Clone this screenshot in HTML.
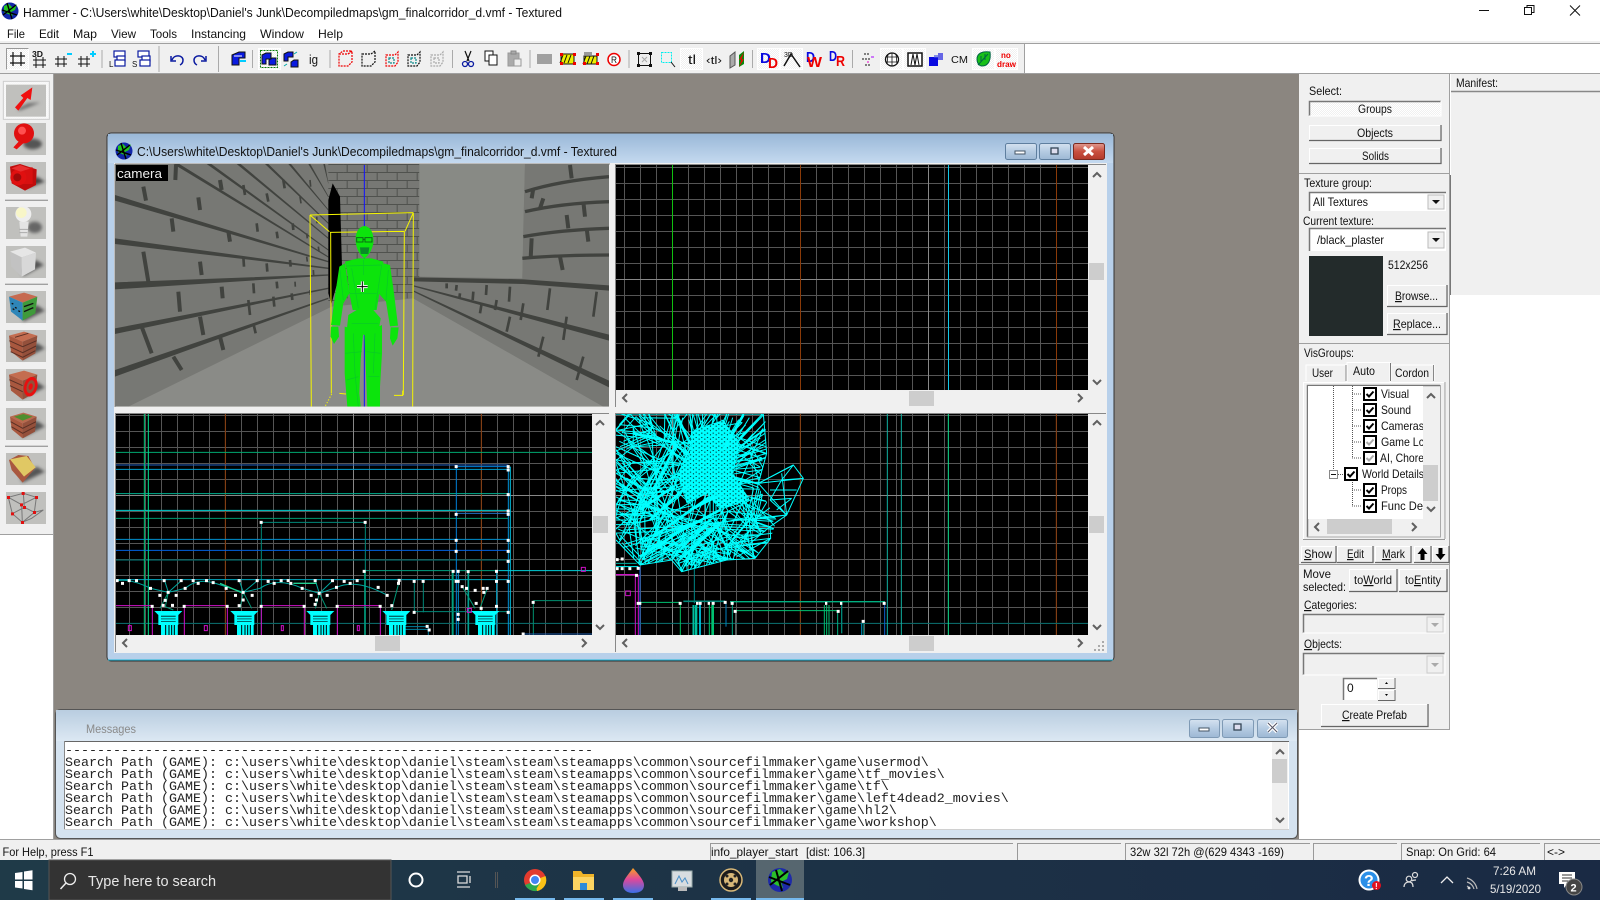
<!DOCTYPE html>
<html><head><meta charset="utf-8"><title>Hammer</title>
<style>
html,body{margin:0;padding:0;background:#fff;width:1600px;height:900px;overflow:hidden}
svg{display:block}
text{font-family:"Liberation Sans",sans-serif;font-size:12px;fill:#111;white-space:pre}
.m{font-family:"Liberation Mono",monospace;font-size:13.33px;fill:#222}
.t{fill:#e8e8e8;font-size:15px}
</style></head><body>
<svg xmlns="http://www.w3.org/2000/svg" width="1600" height="900" viewBox="0 0 1600 900">
<defs>
<filter id="bl" x="-30%" y="-30%" width="160%" height="160%"><feGaussianBlur stdDeviation="5"/></filter>
<pattern id="gridTop" patternUnits="userSpaceOnUse" x="624" y="167" width="16" height="16"><rect width="16" height="16" fill="#000"/><rect width="16" height="1" fill="#555"/><rect width="1" height="16" fill="#555"/></pattern>
<pattern id="gridBR" patternUnits="userSpaceOnUse" x="624" y="415" width="16" height="16"><rect width="16" height="16" fill="#000"/><rect width="16" height="1" fill="#555"/><rect width="1" height="16" fill="#555"/></pattern>
<pattern id="gridBL" patternUnits="userSpaceOnUse" x="129" y="415" width="16" height="16"><rect width="16" height="16" fill="#000"/><rect width="16" height="1" fill="#555"/><rect width="1" height="16" fill="#555"/></pattern>
<pattern id="backBrick" patternUnits="userSpaceOnUse" x="700" y="12" width="60" height="48"><rect width="60" height="48" fill="#777874"/><rect width="60" height="3" fill="#50524e"/><rect y="24" width="60" height="3" fill="#50524e"/><rect x="10" width="3" height="24" fill="#50524e"/><rect x="40" y="24" width="3" height="24" fill="#50524e"/></pattern>
<pattern id="speck" patternUnits="userSpaceOnUse" width="17" height="13"><rect width="17" height="13" fill="#0ff"/><rect x="2" y="3" width="3" height="3" fill="#000"/><rect x="11" y="8" width="3" height="3" fill="#000"/></pattern>
<pattern id="dots" patternUnits="userSpaceOnUse" width="2" height="2"><rect width="2" height="2" fill="#f0f0f0"/><rect width="1" height="1" fill="#fff"/><rect x="1" y="1" width="1" height="1" fill="#fff"/></pattern>
<clipPath id="cCam"><rect x="15" y="12" width="1482" height="728"/></clipPath>
<clipPath id="cBL"><rect x="18" y="12" width="1428" height="663"/></clipPath>
<clipPath id="cBR"><rect x="18" y="12" width="1416" height="663"/></clipPath>
<clipPath id="cTree"><rect x="1308" y="386" width="115" height="133"/></clipPath>
<clipPath id="cDense"><path d="M0 0H465L470 130L445 230L500 330L482 385L435 445L350 450L215 485L185 450L90 465L0 370Z"/></clipPath>
<linearGradient id="wt" x1="0" y1="0" x2="0" y2="1"><stop offset="0" stop-color="#9ab8d8"/><stop offset="1" stop-color="#c4d9ef"/></linearGradient>
<linearGradient id="mt" x1="0" y1="0" x2="0" y2="1"><stop offset="0" stop-color="#b9cde0"/><stop offset="1" stop-color="#dce8f3"/></linearGradient>
<linearGradient id="tb" x1="0" y1="0" x2="1" y2="0"><stop offset="0" stop-color="#1f3a48"/><stop offset="1" stop-color="#1a2a44"/></linearGradient>
<linearGradient id="drop" x1="0" y1="0" x2="0" y2="1"><stop offset="0" stop-color="#f7a020"/><stop offset=".45" stop-color="#e0489a"/><stop offset="1" stop-color="#3a70e8"/></linearGradient>
<linearGradient id="wbtn" x1="0" y1="0" x2="0" y2="1"><stop offset="0" stop-color="#d5e2f0"/><stop offset=".5" stop-color="#b5cbe2"/><stop offset="1" stop-color="#9db8d4"/></linearGradient>
<linearGradient id="wred" x1="0" y1="0" x2="0" y2="1"><stop offset="0" stop-color="#e09a90"/><stop offset=".5" stop-color="#c9503f"/><stop offset="1" stop-color="#b23a2c"/></linearGradient>
<g id="capital">
<path d="M-42 -6H42L30 6V36H-30V6Z" fill="#0ff"/>
<path d="M-22 8h44v4h-44zM-22 16h44v3h-44zM-22 24h44v3h-44z" fill="#006868"/>
<rect x="-22" y="36" width="50" height="36" fill="#0ff"/>
<path d="M-8 36v36M2 36v36M10 36v30M18 36v36" stroke="#000" stroke-width="3"/>
</g>
<g id="gl"><circle r="8.5" fill="#1226a8"/><path d="M-6 -5L-1 -7L3 -3L7 -7L5 -1L1 1L3 5L-2 3L-6 1Z" fill="#22c41e"/><path d="M-7 4L6 -6M-3 -8L2 8M-8 -1L7 4" stroke="#000" stroke-width="1.400"/></g>
<path id="tang" fill="none" stroke="#0ff" stroke-width="3" d="M18 60L120 70L185 100L200 15M120 70L60 12M120 70L100 12M120 70L30 110M120 70L185 100L150 170L100 240L18 190M18 110L150 170M18 190L100 240L70 330L18 300M100 240L190 230L150 170M190 230L230 130L185 100M230 130L300 15M70 330L160 310L190 230M70 330L90 465M70 330L18 330M160 310L90 465M160 310L215 400L90 465M215 400L185 450M215 400L300 340L350 450M300 340L435 445M300 340L480 350M160 310L300 340M90 400L350 450M120 440L300 340M185 450L240 390M215 485L260 400M260 400L350 450M350 450L360 400L435 445M360 400L482 385M360 400L420 330M420 330L480 350M420 330L445 220M470 130L300 180M465 70L300 180M460 15L300 180M400 15L300 180M350 15L300 180M250 15L300 180M185 100L300 180M230 130L300 180M190 230L300 180M300 340L300 180M420 330L300 180M445 220L300 180M380 100L470 130M380 100L460 15M18 390L90 465M18 240L160 310M18 150L100 240M60 12L18 60M150 170L70 330M100 240L160 310M240 390L300 340"/>
</defs>

<rect width="1600" height="900" fill="#fff"/>
<text x="23" y="17" style="font-size:13px" textLength="539" lengthAdjust="spacingAndGlyphs">Hammer - C:\Users\white\Desktop\Daniel's Junk\Decompiledmaps\gm_finalcorridor_d.vmf - Textured</text>
<use href="#gl" x="10" y="11"/>
<path d="M1479 10.500h10" stroke="#111"/>
<path d="M1524.500 7.500h7v7h-7zM1527 7.500V5.500h7v7h-2.500" fill="none" stroke="#111"/>
<path d="M1570 5.500L1580 15.500M1580 5.500L1570 15.500" stroke="#111"/>

<text x="7" y="38" textLength="18" lengthAdjust="spacingAndGlyphs">File</text>
<text x="39" y="38" textLength="20" lengthAdjust="spacingAndGlyphs">Edit</text>
<text x="73" y="38" textLength="24" lengthAdjust="spacingAndGlyphs">Map</text>
<text x="111" y="38" textLength="25" lengthAdjust="spacingAndGlyphs">View</text>
<text x="150" y="38" textLength="27" lengthAdjust="spacingAndGlyphs">Tools</text>
<text x="191" y="38" textLength="55" lengthAdjust="spacingAndGlyphs">Instancing</text>
<text x="260" y="38" textLength="44" lengthAdjust="spacingAndGlyphs">Window</text>
<text x="318" y="38" textLength="25" lengthAdjust="spacingAndGlyphs">Help</text>

<rect y="41" width="1600" height="2" fill="#f0f0f0"/>
<rect y="43" width="1600" height="1" fill="#a0a0a0"/>
<rect y="44" width="1025" height="29" fill="#f0f0f0"/>
<rect x="1024" y="44" width="1" height="29" fill="#a0a0a0"/>
<rect y="73" width="1600" height="1" fill="#a0a0a0"/>
<path d="M102 50v18M159 46v26M218.500 46v26M252.500 50v18M330 50v18M452.500 50v18M530 50v18M629 50v18M752.500 50v18M852.500 50v18" stroke="#aaa"/>
<g fill="url(#dots)" stroke="#fff"><rect x="6.500" y="48.500" width="22" height="21"/><rect x="258.500" y="48.500" width="22" height="21"/><rect x="680.500" y="48.500" width="22" height="21"/><rect x="757.500" y="48.500" width="22" height="21"/><rect x="780.500" y="48.500" width="22" height="21"/><rect x="880.500" y="48.500" width="22" height="21"/><rect x="903.500" y="48.500" width="22" height="21"/><rect x="972.500" y="48.500" width="22" height="21"/><rect x="995.500" y="48.500" width="22" height="21"/></g>
<path d="M6.500 69.500V48.500H28.500" fill="none" stroke="#999"/>

<!-- toolbar icons -->
<g fill="none" stroke="#111">
<path d="M13 52v14M21 52v14M10 56h15M10 63h15" stroke-width="1.200"/>
<path d="M36 57v11M43 57v11M33 60h13M33 65h13M58 56v11M64 56v11M55 59h12M55 64h12M81 56v11M87 56v11M78 59h12M78 64h12" stroke-width="1"/>
<path d="M67 54h5" stroke="#0cf" stroke-width="2"/>
<path d="M90 54h6M93 51v6" stroke="#0cf" stroke-width="2"/>
</g>
<text x="32" y="57" style="font-size:8px;font-weight:bold" textLength="11" lengthAdjust="spacingAndGlyphs">3D</text>
<g fill="#fff" stroke="#0a1aa0" stroke-width="1.200"><rect x="114" y="51" width="11" height="6"/><rect x="117" y="56" width="8" height="5"/><rect x="115" y="60" width="10" height="6"/><rect x="138" y="51" width="11" height="6"/><rect x="142" y="56" width="8" height="5"/><rect x="140" y="60" width="10" height="6"/></g>
<text x="109" y="67" style="font-size:8px">L</text><text x="132" y="67" style="font-size:8px">S</text>
<path d="M172 60c2-6 11-5 11 0c0 2-1 4-3 5M171 56v5h5" fill="none" stroke="#0a1aa0" stroke-width="1.500"/>
<path d="M205 60c-2-6-11-5-11 0c0 2 1 4 3 5M206 56v5h-5" fill="none" stroke="#0a1aa0" stroke-width="1.500"/>
<path d="M232 55l7-3h6v6h-6v7h-7z" fill="#0a1ae0" stroke="#111"/><path d="M240 61h6" stroke="#0cf" stroke-width="2"/><path d="M234 56h8" stroke="#fff"/>
<rect x="260.500" y="50.500" width="17" height="17" fill="none" stroke="#0a7a0a" stroke-dasharray="2 1"/>
<path d="M262 55l4-2h5v6h-5v5h-4zM269 60l3-2h4v7h-7z" fill="#0a1ae0" stroke="#111"/>
<path d="M284 54l4-2h5v5h-5v4h-4zM291 62l3-2h4v7h-7z" fill="#0a1ae0" stroke="#111"/><path d="M294 54l3-2M284 66l3-2" stroke="#0aa"/>
<text x="309" y="64" style="font-size:13px" textLength="9" lengthAdjust="spacingAndGlyphs">ig</text>
<g fill="none" stroke-width="1.200" stroke-dasharray="2 1">
<path d="M339 54h9l4-3v11l-4 4h-9z" stroke="#e00"/><path d="M348 54l4-3h-9l-4 3" stroke="#e00"/>
<path d="M362 54h9l4-3v11l-4 4h-9z" stroke="#111"/>
<path d="M386 55h9l3-3v10l-3 4h-9z" stroke="#e00"/><rect x="389" y="58" width="5" height="5" stroke="#0a8a8a"/>
<path d="M408 55h9l3-3v10l-3 4h-9z" stroke="#111"/><rect x="411" y="58" width="5" height="5" stroke="#0a8a8a"/>
<path d="M431 55h9l3-3v10l-3 4h-9z" stroke="#aaa"/><rect x="434" y="58" width="5" height="5" stroke="#aaa"/>
</g>
<path d="M465 51l4 10M471 51l-4 10" stroke="#111" stroke-width="1.200"/><circle cx="465" cy="64" r="2.500" fill="none" stroke="#0a1aa0" stroke-width="1.300"/><circle cx="471" cy="64" r="2.500" fill="none" stroke="#0a1aa0" stroke-width="1.300"/>
<rect x="485" y="51" width="8" height="10" fill="#fff" stroke="#111"/><rect x="489" y="55" width="8" height="10" fill="#fff" stroke="#111"/>
<rect x="508" y="53" width="11" height="13" fill="#aaa" stroke="#999"/><rect x="511" y="51" width="5" height="3" fill="#aaa" stroke="#888"/><rect x="514" y="59" width="7" height="7" fill="#eee" stroke="#999"/>
<rect x="537" y="54" width="15" height="10" fill="#a0a0a0"/>
<rect x="561" y="54" width="13" height="10" fill="#ee0" stroke="#111"/><path d="M563 55l-3 8M567 55l-3 8M571 55l-3 8" stroke="#111"/><path d="M560 53h3v3h-3zM573 53h3v3h-3zM560 62h3v3h-3zM573 62h3v3h-3z" fill="#e00"/>
<rect x="584" y="56" width="13" height="8" fill="#ee0" stroke="#111"/><path d="M586 56l-3 8M590 56l-3 8M594 56l-3 8" stroke="#111"/><path d="M584 52h8v3h-8z" fill="#999"/><path d="M583 62h3v3h-3zM596 62h3v3h-3zM596 53h3v3h-3z" fill="#e00"/>
<circle cx="614" cy="59.500" r="6" fill="#fff" stroke="#e00" stroke-width="1.500"/><text x="611" y="63" style="font-size:9px" textLength="6" lengthAdjust="spacingAndGlyphs">R</text>
<rect x="638.500" y="53.500" width="12" height="12" fill="#eee" stroke="#111"/><path d="M637 52h3v3h-3zM649 52h3v3h-3zM637 64h3v3h-3zM649 64h3v3h-3z" fill="#111"/>
<path d="M642 57l5 5M647 57l-5 5" stroke="#aaa"/>
<rect x="661.500" y="52.500" width="10" height="10" fill="none" stroke="#0ee" stroke-dasharray="2 1"/><path d="M671 62l4 5" stroke="#111"/>
<text x="688" y="64" style="font-size:13px" textLength="8" lengthAdjust="spacingAndGlyphs">tl</text>
<text x="706" y="64" style="font-size:11px" textLength="16" lengthAdjust="spacingAndGlyphs">‹tl›</text>
<path d="M730 56l5-4v13l-5 3z" fill="#aaa" stroke="#555"/><path d="M739 55l5-4v13l-5 3z" fill="#0a8a0a"/><path d="M744 52l-5 8l5-1l-5 8z" fill="#e00"/>
<text x="760" y="63" style="font-size:15px;fill:#0a0ae0;font-weight:bold">D</text><text x="768" y="68" style="font-size:15px;fill:#e00;font-weight:bold" textLength="10" lengthAdjust="spacingAndGlyphs">D</text>
<text x="784" y="57" style="font-size:7px">3D</text>
<text x="806" y="62" style="font-size:15px;fill:#0a0ae0;font-weight:bold" textLength="9" lengthAdjust="spacingAndGlyphs">D</text><text x="807" y="67" style="font-size:15px;fill:#e00;font-weight:bold" textLength="15" lengthAdjust="spacingAndGlyphs">W</text>
<text x="829" y="61" style="font-size:15px;fill:#0a0ae0;font-weight:bold" textLength="8" lengthAdjust="spacingAndGlyphs">D</text><text x="836" y="66" style="font-size:15px;fill:#e00;font-weight:bold" textLength="9" lengthAdjust="spacingAndGlyphs">R</text>
<path d="M784 66l7-12l9 13" fill="none" stroke="#111" stroke-width="1.500"/>
<path d="M864 54h5M862 59h8M865 65h5" stroke="#111" stroke-dasharray="2 1"/><path d="M871 57h3" stroke="#a0f"/><path d="M867 62h2" stroke="#e0c"/>
<circle cx="892" cy="59.500" r="6.500" fill="#fff" stroke="#111" stroke-width="1.300"/><path d="M886 57h12M886 62h12M892 53v13M888 54l-1 10M896 54l1 10" stroke="#111" stroke-width=".8"/>
<rect x="908" y="53" width="14" height="13" fill="#fff" stroke="#111" stroke-width="1.500"/><path d="M911 65l2-11l2 11l2-11l2 11" fill="none" stroke="#111"/>
<rect x="929" y="57" width="9" height="9" fill="#0a0ae0"/><path d="M938 53h5v7h-5z" fill="#0a0ae0" opacity=".6"/><path d="M934 55h4v3h-4z" fill="#4050e0" opacity=".6"/>
<text x="951" y="63" style="font-size:10px" textLength="17" lengthAdjust="spacingAndGlyphs">CM</text>
<path d="M977 59c0-6 6-8 13-7c1 7-1 14-8 14c-3 0-5-3-5-7z" fill="#18c018" stroke="#064"/><path d="M978 65l10-11M981 56v5M985 54v6" stroke="#064"/>
<text x="1001" y="58" style="font-size:8px;fill:#e00;font-weight:bold">no</text><text x="997" y="67" style="font-size:8px;fill:#e00;font-weight:bold" textLength="19" lengthAdjust="spacingAndGlyphs">draw</text>

<!-- left toolbar & main -->
<rect x="54" y="74" width="1245" height="766" fill="#8b8680"/>
<rect x="0" y="74" width="53" height="460" fill="#f0f0f0"/>
<rect x="53" y="74" width="1" height="766" fill="#a0a0a0"/>
<rect x="0" y="534" width="54" height="1" fill="#a0a0a0"/>
<g transform="translate(0 70) scale(.33333)">
<rect x="10" y="34" width="138" height="114" fill="url(#dots)" stroke="#ccc" stroke-width="3"/>
<g fill="#c0c0bd">
<rect x="18" y="44" width="120" height="96"/><rect x="18" y="159" width="120" height="96"/><rect x="18" y="276" width="120" height="96"/><rect x="18" y="411" width="120" height="96"/><rect x="18" y="528" width="120" height="96"/><rect x="18" y="663" width="120" height="96"/><rect x="18" y="780" width="120" height="96"/><rect x="18" y="897" width="120" height="96"/><rect x="18" y="1014" width="120" height="96"/><rect x="18" y="1149" width="120" height="96"/><rect x="18" y="1266" width="120" height="96"/>
</g>
<path d="M15 391h129M15 643h129M15 1129h129" stroke="#a0a0a0" stroke-width="4"/>
<!-- arrow -->
<path d="M58 122L122 97L85 100L52 116Z" fill="#666" filter="url(#bl)"/>
<path d="M45 112L70 84L62 76L97 52L92 90L82 84L55 122Z" fill="#f01010"/>
<!-- magnifier -->
<ellipse cx="98" cy="222" rx="28" ry="16" fill="#555" filter="url(#bl)"/>
<path d="M40 232L62 208L72 218L50 238Z" fill="#e81010"/><circle cx="72" cy="190" r="30" fill="#e01010"/><circle cx="66" cy="182" r="12" fill="#ff5050"/>
<!-- camera -->
<path d="M80 355L135 335L110 320L85 340Z" fill="#444" filter="url(#bl)"/>
<path d="M30 290L60 282L110 298L108 345L75 362L35 340Z" fill="#c00c0c"/><path d="M68 292h30v50h-30z" fill="#d81010"/><circle cx="55" cy="322" r="24" fill="#e01010"/><circle cx="52" cy="322" r="12" fill="#a00a0a"/><path d="M34 295L60 285L90 296L62 305Z" fill="#e83030"/>
<!-- bulb -->
<ellipse cx="104" cy="472" rx="22" ry="17" fill="#666" filter="url(#bl)"/><path d="M58 455h28l-4 45h-20z" fill="#e4e4e4"/><circle cx="70" cy="432" r="24" fill="#eee"/><circle cx="64" cy="428" r="16" fill="#f8f6c8"/><path d="M58 478h26M58 488h24" stroke="#aaa" stroke-width="3"/>
<!-- cube -->
<path d="M70 618L132 585L108 570L60 600Z" fill="#555" filter="url(#bl)"/>
<path d="M30 545L75 533L108 548L65 562Z" fill="#e6e6e6"/><path d="M30 545L65 562L65 620L34 590Z" fill="#c2c2c2"/><path d="M65 562L108 548L105 598L65 620Z" fill="#d8d8d8"/>
<!-- textured cubes -->
<path d="M70 755L135 722L110 705L65 735Z" fill="#555" filter="url(#bl)"/>
<path d="M27 680L72 668L112 680L68 698Z" fill="#c66a50"/><path d="M27 680L68 698L68 752L33 725Z" fill="#2f86b8"/><path d="M68 698L112 680L106 730L68 752Z" fill="#3f9a3a"/>
<path d="M35 700l5 2M45 712l5 3M38 716l5 3M55 722l5 3M72 710l28-10M72 725l28-12" stroke="#111" stroke-width="4"/>
<path d="M68 868L135 835L110 818L60 850Z" fill="#555" filter="url(#bl)"/>
<path d="M27 797L72 785L112 797L68 815Z" fill="#c46d50"/><path d="M27 797L68 815L68 872L33 845Z" fill="#a9583f"/><path d="M68 815L112 797L106 850L68 872Z" fill="#94503b"/>
<path d="M28 812L68 830L110 812M30 830L68 848L108 828M32 845L68 862L106 842M45 802L85 790" stroke="#5a3025" stroke-width="3" fill="none"/>
<path d="M68 985L135 952L110 935L60 967Z" fill="#555" filter="url(#bl)"/>
<path d="M27 914L72 902L112 914L68 932Z" fill="#c46d50"/><path d="M27 914L68 932L68 989L33 962Z" fill="#a9583f"/><path d="M68 932L112 914L106 967L68 989Z" fill="#94503b"/>
<path d="M28 929L68 947M30 947L68 965" stroke="#5a3025" stroke-width="3"/>
<ellipse cx="92" cy="950" rx="20" ry="30" fill="#e81010" transform="rotate(15 92 950)"/><ellipse cx="92" cy="950" rx="12" ry="20" fill="#94503b" transform="rotate(15 92 950)"/><ellipse cx="92" cy="950" rx="6" ry="10" fill="#e81010" transform="rotate(15 92 950)"/>
<path d="M68 1102L135 1069L110 1052L60 1084Z" fill="#555" filter="url(#bl)"/>
<path d="M30 1040L70 1028L110 1040L68 1060Z" fill="#b9694d"/><path d="M42 1040L70 1032L98 1040L68 1052Z" fill="#4f8f2e"/><path d="M30 1040L68 1060L68 1105L35 1078Z" fill="#a9583f"/><path d="M68 1060L110 1040L105 1085L68 1105Z" fill="#94503b"/><path d="M32 1055L68 1075L108 1055M34 1070L68 1090L106 1070" stroke="#5a3025" stroke-width="3" fill="none"/>
<!-- wedge -->
<path d="M68 1238L135 1205L110 1190L60 1222Z" fill="#555" filter="url(#bl)"/>
<path d="M27 1170L55 1155L85 1158L105 1195L68 1238L35 1200Z" fill="#a9583f"/><path d="M30 1168L80 1158L107 1192L72 1220Z" fill="#e0c864"/>
<!-- wire -->
<path d="M25 1282L70 1270L109 1282L65 1304ZM25 1282L37 1331L67 1357L65 1304M109 1282L103 1327L67 1357M70 1270L73 1312L37 1331M73 1312L103 1327M103 1327L130 1320L95 1345L67 1357" fill="none" stroke="#777" stroke-width="3"/>
<path d="M21 1278h9v9h-9zM65 1266h9v9h-9zM105 1278h9v9h-9zM60 1300h9v9h-9zM33 1327h9v9h-9zM69 1308h9v9h-9zM99 1323h9v9h-9zM63 1353h9v9h-9z" fill="#e01010"/>
</g>

<!-- child window -->
<rect x="107" y="133" width="1007" height="528" rx="4" fill="#b8d0ea" stroke="#333"/>
<path d="M108 134h1005v29H108z" fill="url(#wt)"/>
<path d="M108 653h1005v6H108z" fill="#b8d0ea"/><path d="M108 660h1005" stroke="#22b8d8"/>
<use href="#gl" x="124" y="151"/>
<text x="137" y="156" style="font-size:13px" textLength="480" lengthAdjust="spacingAndGlyphs">C:\Users\white\Desktop\Daniel's Junk\Decompiledmaps\gm_finalcorridor_d.vmf - Textured</text>
<g stroke="#5f7f9f"><rect x="1005.500" y="143.500" width="31" height="16" rx="2" fill="url(#wbtn)"/><rect x="1039.500" y="143.500" width="31" height="16" rx="2" fill="url(#wbtn)"/><rect x="1073.500" y="143.500" width="31" height="16" rx="2" fill="url(#wred)" stroke="#7a2a20"/></g>
<rect x="1015" y="151" width="10" height="3" fill="#fff" stroke="#456"/><rect x="1051" y="148" width="7" height="6" fill="#dde" stroke="#345" stroke-width="1.300"/><path d="M1084 147l9 8M1093 147l-9 8" stroke="#fff" stroke-width="3"/>

<rect x="114" y="163" width="993" height="490" fill="#f0f0f0"/>
<rect x="114.500" y="164" width="1" height="243" fill="#888"/><rect x="115" y="163.500" width="495" height="1" fill="#888"/>

<!-- camera view -->
<g transform="translate(110 160) scale(.33333)" clip-path="url(#cCam)">
<rect x="15" y="12" width="1482" height="728" fill="#777874"/>
<path d="M55 740L665 440L910 415L1480 740Z" fill="#8a8b87"/>
<rect x="700" y="12" width="228" height="403" fill="url(#backBrick)"/>
<path d="M655 12H700V430H655Z" fill="url(#backBrick)"/>
<g fill="#41433f">
<path d="M190 12L208 12L655 289L655 293ZM290 12L304 12L655 268L655 272ZM380 12L392 12L655 233L655 237ZM465 12L475 12L655 188L655 192ZM535 12L543 12L655 148L655 152ZM595 12L601 12L655 108L655 112ZM640 12L645 12L655 68L655 72Z"/>
<path d="M15 105L15 122L655 307L655 303ZM15 235L15 252L655 327L655 323ZM15 367L15 388L655 347L655 343ZM15 505L15 522L655 387L655 383ZM15 630L15 650L655 417L655 413Z"/>
</g>
<path d="M100 80L108 122M198 15L196 60M265 112L270 150M185 175L190 215M100 275L115 365M205 395L210 455M95 500L125 580M190 590L215 630M270 305L275 345M270 470L280 525M335 380L338 415M330 530L340 570M355 215L360 245M330 60L335 90" stroke="#41433f" stroke-width="12" fill="none"/>
<path d="M400 75L405 105M470 100L475 125M520 60L524 85M440 190L443 215M500 215L503 235M400 290L402 320M470 310L472 335M430 370L432 400M500 365L502 385M415 420L420 465M490 410L493 440M430 490L437 520M545 400L547 420M540 300L542 320M548 190L550 210" stroke="#41433f" stroke-width="8" fill="none"/>
<path d="M570 110L573 130M600 60L602 80M590 220L592 235M620 170L621 190M590 290L592 305M625 260L627 275M555 365L556 380M610 330L611 345M600 390L601 405" stroke="#41433f" stroke-width="5" fill="none"/>
<path d="M655 120L668 70L690 110L696 320L664 432L655 400Z" fill="#000"/>
<path d="M928 12H1245L1237 355L928 350Z" fill="#888a85"/>
<path d="M1245 12H1497V372L1237 355L1240 200Z" fill="#777874"/>
<path d="M910 350L1497 372V740H1480L910 415Z" fill="#777874"/>
<g fill="#41433f"><path d="M912 352L1240 358L1497 376V392L1240 372L912 364Z"/><path d="M912 376L1497 524V542L912 380ZM912 392L1497 662V682L912 396Z"/></g>
<path d="M1130 375L1128 405M1200 380L1197 425M1320 385L1312 450M1460 395L1450 470M1040 375L1038 392M1090 395L1088 420M1160 420L1155 450M1240 430L1232 480M1370 470L1360 540M1010 370L1010 385M1050 400L1048 415M1115 430L1110 460M1200 470L1190 515M1300 530L1285 590M1420 590L1400 660" stroke="#41433f" stroke-width="8" fill="none"/>
<path d="M1245 95Q1350 62 1497 50M1245 155Q1350 130 1497 125M1240 230Q1350 210 1497 205M1237 295Q1350 285 1497 285" stroke="#41433f" stroke-width="10" fill="none"/>
<path d="M1380 15L1385 55M1270 85L1265 115M1300 115L1290 145M1420 125L1425 170M1370 165L1375 205M1430 205L1435 245M1265 235L1262 295M1350 290L1358 330" stroke="#41433f" stroke-width="12" fill="none"/>
<!-- blue axis -->
<path d="M763 15V740" stroke="#1010ff" stroke-width="3"/>
<!-- yellow box -->
<path d="M600 165L910 158M600 165L604 740M910 158L908 740M660 217L883 214M662 217L664 700M883 214L880 705M600 165L658 215M910 158L885 214M688 700L708 702M852 706L878 706M878 692L878 708" fill="none" stroke="#f5f500" stroke-width="3"/>
<path d="M665 702L645 740" stroke="#f5f500" stroke-width="3" stroke-dasharray="4 5"/>
<!-- figure -->
<g fill="#0ce40c">
<path d="M763 198C785 200 792 225 790 250C785 275 772 290 763 295C750 285 740 270 737 245C735 220 745 200 763 198Z"/>
<path d="M705 305L745 295L785 295L820 305L818 345L808 400L800 450L728 450L718 400L712 340Z"/>
<path d="M705 310L688 320L676 400L663 495L690 497L700 430L718 400Z"/>
<path d="M820 310L840 315L852 400L864 497L840 499L828 425L806 400Z"/>
<path d="M663 500L685 500L687 530L672 552L662 530Z"/>
<path d="M842 502L866 502L862 535L848 557L840 535Z"/>
<path d="M715 465L745 447L790 450L812 475L805 520L765 525L710 515Z"/>
<path d="M704 500L760 515L752 600L748 700L752 740L712 740L704 640Z"/>
<path d="M763 520L816 495L816 580L810 680L810 740L772 740L768 640Z"/>
</g>
<path d="M750 262L778 262L775 282L752 282Z" fill="#0a8a28"/>
<path d="M740 233h19v13h-19zM765 233h21v13h-21zM759 238h6" fill="none" stroke="#0a6a14" stroke-width="3"/>
<path d="M710 318L815 315L795 450M725 325L745 445M760 300V345M720 400L800 400M725 490L805 490M730 520L735 640L745 740M795 520L790 640M706 580L755 575M770 575L812 580M690 330L700 420M835 330L828 420M710 660L745 650M775 650L808 650" fill="none" stroke="#0ac828" stroke-width="2"/>
<path d="M741 380h32M757 364v32" stroke="#fff" stroke-width="9"/><path d="M741 380h32M757 364v32" stroke="#000" stroke-width="3"/>
</g>
<rect x="116" y="165" width="52" height="16" fill="#000"/>
<text x="117" y="178" style="font-size:13px;fill:#eee" textLength="45" lengthAdjust="spacingAndGlyphs">camera</text>

<!-- top right pane -->
<rect x="615" y="164" width="1" height="243" fill="#888"/><rect x="615" y="164" width="491" height="1" fill="#888"/>
<rect x="616" y="165" width="472" height="225" fill="url(#gridTop)"/>
<path d="M616 279.500h472M928.500 165v225" stroke="#888"/>
<path d="M672.500 165v225" stroke="#10c010"/><path d="M800.500 165v225M1056.500 165v225" stroke="#8a3a08"/><path d="M948.500 165v225" stroke="#10c8e8"/>

<!-- bottom left pane -->
<rect x="115" y="413" width="1" height="239" fill="#888"/><rect x="115" y="413" width="494" height="1" fill="#888"/>
<rect x="116" y="414" width="476" height="221" fill="url(#gridBL)"/>
<path d="M116 495.500h476M353.500 414v221" stroke="#888"/>
<g transform="translate(110 410) scale(.33333)" clip-path="url(#cBL)" fill="none" stroke-width="3">
<path d="M346 12V675M1114 12V675" stroke="#8a3a08"/>
<path d="M18 640H1446" stroke="#006868"/>
<path d="M18 127H1446" stroke="#00a870"/>
<path d="M18 165H1195" stroke="#2060c0"/><path d="M18 178H1195" stroke="#00a0d0"/>
<path d="M18 251H1195" stroke="#00b090"/><path d="M18 301H1195" stroke="#00d0d0"/><path d="M18 325H1195" stroke="#009870"/>
<path d="M18 388H1195" stroke="#0090d0"/><path d="M18 421H1195" stroke="#0060e0"/><path d="M18 450H1195" stroke="#006060" stroke-width="4"/>
<path d="M103 12V675" stroke="#00c878"/><path d="M115 12V675" stroke="#00e090"/>
<path d="M1039 170V675M1039 170H1195" stroke="#0080d8"/><path d="M1195 170V675" stroke="#0090d8"/><path d="M1201 170V675" stroke="#00c0e0"/>
<path d="M1040 310H1195" stroke="#2070c0"/>
<path d="M454 337H766V482M454 337V675" stroke="#008878"/>
<path d="M763 482H1030M1045 482H1160" stroke="#00a080"/><path d="M1165 482H1446" stroke="#00d0d8"/>
<path d="M18 509H1195" stroke="#00a8c0"/>
<path d="M765 482V675" stroke="#00a080" stroke-width="5"/><path d="M1028 484V675" stroke="#00a080" stroke-width="6"/><path d="M1075 484V675" stroke="#00a090" stroke-width="5"/><path d="M1045 484V675" stroke="#0090d0"/><path d="M1160 484V675" stroke="#0090b0" stroke-width="4"/>
<path d="M913 514V607M940 514V607M913 605H1195" stroke="#008878"/>
<path d="M1270 572H1446M1270 577V675" stroke="#009070"/><path d="M1240 672H1446" stroke="#2060b0"/>
<path d="M850 650H955M850 658H955M955 650V675" stroke="#0080a0"/>
<path d="M18 587H127M223 587H352M454 587H583M682 587H811M127 587V675M223 587V675M352 587V675M454 587V675M583 587V675M682 587V675M811 587V675" stroke="#d010c8"/>
<path d="M55 647h9v15h-9zM283 647h9v15h-9zM514 647h6v15h-6zM742 647h6v15h-6zM1414 472h12v12h-12zM1072 595h12v12h-12z" stroke="#d010c8"/>
<path d="M22 512Q60 505 122 535M122 535L175 547L226 535Q260 505 310 518L400 547L450 535Q500 500 577 535L628 550L680 532Q740 505 832 556M164 512L175 547M214 512L175 547M388 512L400 547M442 512L400 547M616 512L628 550M668 512L628 550" stroke="#00a8a0"/>
<path d="M175 547L166 590L190 600M175 547L150 595M400 547L390 595M400 547L425 595M628 550L616 595M628 550L650 595M866 520L845 600M1057 530L1095 595M1132 535L1110 595" stroke="#009878"/>
<path d="M330 520L395 548M550 520L620 520" stroke="#20d090" stroke-width="4"/>
<use href="#capital" x="175" y="609"/><use href="#capital" x="403" y="609"/><use href="#capital" x="631" y="609"/><use href="#capital" x="859" y="609"/><use href="#capital" x="1126" y="609"/>
<path stroke="#fff" stroke-width="9" d="M1034 170h9M1190 170h9M1190 180h9M1190 254h9M1190 303h9M1034 313h9M1190 313h9M449 337h9M761 337h9M1034 391h9M1190 391h9M1034 424h9M1190 424h9M1190 454h9M758 484h9M1025 484h9M1040 484h9M1155 484h9M1070 485h9M863 511h9M908 514h9M935 514h9M1034 514h9M1040 514h9M1155 514h9M1190 514h9M17 512h9M33 520h9M53 512h9M75 512h9M117 535h9M158 512h9M209 512h9M221 535h9M245 512h9M260 520h9M285 512h9M305 518h9M344 535h9M383 512h9M395 547h9M437 512h9M470 514h9M488 520h9M509 512h9M530 512h9M538 520h9M572 535h9M611 512h9M623 550h9M663 512h9M675 532h9M698 514h9M716 520h9M737 512h9M800 532h9M827 556h9M861 520h9M170 547h9M145 556h9M194 556h9M161 571h9M122 589h9M218 589h9M347 589h9M372 556h9M422 556h9M383 587h9M449 589h9M599 556h9M647 556h9M611 583h9M578 589h9M677 589h9M806 589h9M841 587h9M908 607h9M1052 530h9M1065 535h9M1091 541h9M1115 535h9M1127 535h9M1117 547h9M1094 580h9M1109 595h9M1155 589h9M1190 607h9M1040 613h9M1040 628h9M947 649h9M953 660h9M1265 577h9M1235 672h9M155 586h9M183 586h9M395 570h9M615 570h9"/>
</g>

<!-- bottom right pane -->
<rect x="615" y="413" width="1" height="239" fill="#888"/><rect x="615" y="413" width="491" height="1" fill="#888"/>
<rect x="616" y="414" width="472" height="221" fill="url(#gridBR)"/>
<path d="M616 495.500h472M672.500 414v221M928.500 414v221" stroke="#888"/>
<g transform="translate(610 410) scale(.33333)" clip-path="url(#cBR)" fill="none" stroke-width="3">
<path d="M571 12V675M1339 12V675" stroke="#8a3a08"/>
<path d="M18 640H1434" stroke="#006868"/>
<path d="M832 12V675M874 12V675" stroke="#10b0a0"/><path d="M1015 12V675" stroke="#10e090"/>
<path d="M253 470V580" stroke="#008888"/>
<path d="M18 494H80" stroke="#d010c8" stroke-width="4"/><path d="M76 494V675M85 494V675" stroke="#d010c8"/><path d="M90 470V675" stroke="#1060e0"/>
<path d="M47 543h14v14h-14z" stroke="#d010c8"/>
<path d="M90 577H210" stroke="#00c070"/><path d="M220 574H345" stroke="#008878" stroke-width="5"/><path d="M360 575H825" stroke="#00b080" stroke-width="4"/><path d="M376 602H685" stroke="#00c070"/>
<path d="M211 580V675" stroke="#00c060"/><path d="M250 585V675" stroke="#00c0a0" stroke-width="5"/><path d="M258 585V675" stroke="#00c0a0" stroke-width="8"/><path d="M270 580V675" stroke="#00d0f0" stroke-width="5"/><path d="M298 585V675" stroke="#00c070"/><path d="M308 585V675" stroke="#00c070" stroke-width="8"/>
<path d="M348 574V650" stroke="#0080c0"/><path d="M367 580V675" stroke="#00a080"/><path d="M377 605V675" stroke="#607070"/><path d="M643 585V675M650 585V675M657 585V675" stroke="#00c070"/><path d="M683 605V675" stroke="#00b080"/><path d="M695 580V670" stroke="#008878" stroke-width="4"/><path d="M755 640V675" stroke="#0090c0"/><path d="M760 640V675" stroke="#008878"/><path d="M824 580V675" stroke="#1060d0"/>
<path d="M18 470H85" stroke="#0ff"/><path d="M18 460H80" stroke="#00b0a0"/>
<!-- tangle -->
<g clip-path="url(#cDense)">
<use href="#tang"/><use href="#tang" transform="translate(18 8)"/><use href="#tang" transform="translate(-14 14)"/><use href="#tang" transform="translate(10 -16)"/>
<use href="#tang" transform="rotate(25 260 220)"/><use href="#tang" transform="rotate(-30 260 220)"/><use href="#tang" transform="rotate(60 260 220)"/><use href="#tang" transform="rotate(-70 240 220) translate(-10 20)"/><use href="#tang" transform="rotate(12 200 200) translate(-30 -10)"/>
</g>
<path d="M250 60L340 30L390 100L370 190L420 270L330 300L290 250L230 280L200 190L240 130Z" fill="url(#speck)"/>
<path d="M18 12H460L465 70L470 130L445 220L550 165L580 205L530 315L480 350L482 385L435 445L350 450L215 485L185 450L90 465L18 390" stroke="#0ff"/>
<path d="M130 240L200 100M120 330L240 220M180 380L330 300M90 440L200 370M240 300L340 250M200 15L240 100M400 15L340 120M130 380L300 260M70 70L200 100M90 300L190 230M220 440L330 340" stroke="#0ff" stroke-width="8"/>
<path d="M445 220L550 165M445 220L580 205M515 190L530 315M480 240L560 240M500 300L545 265M515 210L580 205M515 210L550 165M515 210L480 270M480 270L545 265M480 270L530 315M445 220L530 315M420 330L530 315M300 340L530 315M480 350L420 400M482 385L380 440M435 445L405 370M215 485L200 440M215 485L240 430M230 470L285 400" stroke="#0ff"/>
<path stroke="#fff" stroke-width="9" d="M17 449h9M32 447h9M17 476h9M32 476h9M55 476h9M75 496h9M85 580h9M80 580h9M206 580h9M266 580h9M341 577h9M371 604h9M680 604h9M755 634h9M362 580h9M818 580h9M258 580h7M293 580h7M305 580h9M645 580h7M690 580h7M80 475h9"/>
</g>

<!-- scrollbars -->
<g fill="#cdcdcd"><rect x="1089" y="263" width="15" height="17"/><rect x="909" y="391" width="25" height="15"/><rect x="593" y="516" width="15" height="17"/><rect x="375" y="636" width="25" height="15"/><rect x="1089" y="516" width="15" height="17"/><rect x="909" y="636" width="25" height="15"/></g>
<g fill="none" stroke="#606060" stroke-width="2">
<path d="M1093 177l4-4l4 4M1093 380l4 4l4-4M627 394l-4 4l4 4M1078 394l4 4l-4 4"/>
<path d="M596 425l4-4l4 4M596 625l4 4l4-4M127 639l-4 4l4 4M582 639l4 4l-4 4"/>
<path d="M1093 425l4-4l4 4M1093 625l4 4l4-4M627 639l-4 4l4 4M1078 639l4 4l-4 4"/>
</g>
<path d="M1102 649h2v2h-2zM1098 649h2v2h-2zM1094 649h2v2h-2zM1102 645h2v2h-2zM1098 645h2v2h-2zM1102 641h2v2h-2z" fill="#aaa"/>

<!-- messages window -->
<rect x="55.500" y="709.500" width="1242" height="129" rx="5" fill="#d5e3f0" stroke="#555"/>
<path d="M56 710h1241v31H56z" fill="url(#mt)"/>
<text x="86" y="733" style="font-size:12px;fill:#8a8a8a" textLength="50" lengthAdjust="spacingAndGlyphs">Messages</text>
<g stroke="#7f9ab5"><rect x="1189.500" y="719.500" width="30" height="18" rx="2" fill="url(#wbtn)"/><rect x="1222.500" y="719.500" width="31" height="18" rx="2" fill="url(#wbtn)"/><rect x="1257.500" y="719.500" width="30" height="18" rx="2" fill="url(#wbtn)"/></g>
<rect x="1199" y="728" width="10" height="3" fill="#fff" stroke="#456"/><rect x="1234" y="724" width="7" height="6" fill="#dde" stroke="#345" stroke-width="1.300"/><path d="M1268 723l9 9M1277 723l-9 9" stroke="#fff" stroke-width="3.500"/><path d="M1268 723l9 9M1277 723l-9 9" stroke="#556"/>
<rect x="64" y="741" width="1225" height="89" fill="#fff"/>
<path d="M64 741.500H1289" stroke="#666"/><path d="M64.500 741V829" stroke="#888"/><path d="M64 829.500H1289" stroke="#d0d0d0"/>
<rect x="1272" y="742" width="16" height="87" fill="#f0f0f0"/><rect x="1272" y="759" width="15" height="24" fill="#cdcdcd"/>
<path d="M1276 754l4-4l4 4M1276 818l4 4l4-4" fill="none" stroke="#606060" stroke-width="2"/>
<text class="m" x="65" y="754" textLength="528" lengthAdjust="spacingAndGlyphs">------------------------------------------------------------------</text>
<text class="m" x="65" y="766">Search Path (GAME): c:\users\white\desktop\daniel\steam\steam\steamapps\common\sourcefilmmaker\game\usermod\</text>
<text class="m" x="65" y="778">Search Path (GAME): c:\users\white\desktop\daniel\steam\steam\steamapps\common\sourcefilmmaker\game\tf_movies\</text>
<text class="m" x="65" y="790">Search Path (GAME): c:\users\white\desktop\daniel\steam\steam\steamapps\common\sourcefilmmaker\game\tf\</text>
<text class="m" x="65" y="802">Search Path (GAME): c:\users\white\desktop\daniel\steam\steam\steamapps\common\sourcefilmmaker\game\left4dead2_movies\</text>
<text class="m" x="65" y="814">Search Path (GAME): c:\users\white\desktop\daniel\steam\steam\steamapps\common\sourcefilmmaker\game\hl2\</text>
<text class="m" x="65" y="826">Search Path (GAME): c:\users\white\desktop\daniel\steam\steam\steamapps\common\sourcefilmmaker\game\workshop\</text>

<!-- right panel -->
<rect x="1299" y="74" width="151" height="656" fill="#f0f0f0"/>
<rect x="1451" y="74" width="149" height="221" fill="#f0f0f0"/>
<path d="M1451 91.500H1600" stroke="#888" stroke-width="1.500"/>
<path d="M1449.500 74V729M1299 173.500H1449M1299 343.500H1449M1299 564.500H1449M1299 729.500H1450" stroke="#a0a0a0"/>
<path d="M1450.500 175V295" stroke="#777"/>
<text x="1456" y="87" textLength="42" lengthAdjust="spacingAndGlyphs">Manifest:</text>
<text x="1309" y="95" textLength="33" lengthAdjust="spacingAndGlyphs">Select:</text>
<!-- buttons -->
<rect x="1309" y="101" width="132" height="15" fill="url(#dots)"/><path d="M1309.500 116V101.500H1441" fill="none" stroke="#777" stroke-width="1.500"/><path d="M1441 101V116H1309" fill="none" stroke="#fff"/>
<g fill="#f0f0f0">
<path d="M1309.500 125.500h131v15h-131z" stroke="#fff"/><path d="M1309.500 148.500h131v15h-131z" stroke="#fff"/>
</g>
<path d="M1309 140.500h132V125M1309 163.500h132V148" fill="none" stroke="#666" stroke-width="1.300"/>
<text x="1358" y="113" textLength="34" lengthAdjust="spacingAndGlyphs">Groups</text>
<text x="1357" y="137" textLength="36" lengthAdjust="spacingAndGlyphs">Objects</text>
<text x="1362" y="160" textLength="27" lengthAdjust="spacingAndGlyphs">Solids</text>
<text x="1304" y="187" textLength="68" lengthAdjust="spacingAndGlyphs">Texture group:</text>
<rect x="1309" y="192" width="137" height="19" fill="#fff"/><path d="M1309.500 211V192.500H1446" fill="none" stroke="#777" stroke-width="1.500"/>
<rect x="1428" y="195" width="16" height="14" fill="#f0f0f0" stroke="#bbb"/><path d="M1432 200h8l-4 4z" fill="#111"/>
<text x="1313" y="206" textLength="55" lengthAdjust="spacingAndGlyphs">All Textures</text>
<text x="1303" y="225" textLength="71" lengthAdjust="spacingAndGlyphs">Current texture:</text>
<rect x="1309" y="228" width="137" height="23" fill="#fff"/><path d="M1309.500 251V228.500H1446" fill="none" stroke="#777" stroke-width="1.500"/>
<rect x="1428" y="232" width="16" height="16" fill="#f0f0f0" stroke="#bbb"/><path d="M1432 238h8l-4 4z" fill="#111"/>
<text x="1317" y="244" textLength="67" lengthAdjust="spacingAndGlyphs">/black_plaster</text>
<rect x="1309" y="256" width="74" height="80" fill="#232b2b"/>
<text x="1388" y="269" textLength="40" lengthAdjust="spacingAndGlyphs">512x256</text>
<rect x="1387.500" y="285.500" width="59" height="21" fill="#f0f0f0" stroke="#fff"/><rect x="1387.500" y="313.500" width="59" height="21" fill="#f0f0f0" stroke="#fff"/>
<path d="M1387 306.500h60V285M1387 334.500h60V313" fill="none" stroke="#666" stroke-width="1.300"/>
<text x="1395" y="300" textLength="43" lengthAdjust="spacingAndGlyphs"><tspan text-decoration="underline">B</tspan>rowse...</text>
<text x="1393" y="328" textLength="48" lengthAdjust="spacingAndGlyphs"><tspan text-decoration="underline">R</tspan>eplace...</text>
<text x="1304" y="357" textLength="50" lengthAdjust="spacingAndGlyphs">VisGroups:</text>
<!-- tabs -->
<path d="M1306 381V365h40v16M1391 381V365h43v16" fill="#f0f0f0" stroke="#fff"/>
<path d="M1346 365v16M1433.500 365v16" stroke="#888"/>
<path d="M1347 382V362.500h43V382" fill="#f0f0f0" stroke="#fff"/><path d="M1390.500 363v18" stroke="#777"/>
<text x="1312" y="377" textLength="21" lengthAdjust="spacingAndGlyphs">User</text>
<text x="1353" y="375" textLength="22" lengthAdjust="spacingAndGlyphs">Auto</text>
<text x="1395" y="377" textLength="34" lengthAdjust="spacingAndGlyphs">Cordon</text>
<rect x="1303.500" y="382.500" width="142" height="157" fill="none" stroke="#fff"/><path d="M1445 382v157M1303 539.500h142" stroke="#999"/>
<path d="M1307.500 537V385.500H1440" fill="none" stroke="#777" stroke-width="1.500"/><path d="M1440.500 385V537H1307" fill="none" stroke="#aaa"/>
<rect x="1308" y="386" width="115" height="133" fill="#fff"/>
<rect x="1423" y="465" width="15" height="36" fill="#cdcdcd"/><rect x="1327" y="519" width="65" height="15" fill="#cdcdcd"/>
<path d="M1427 398l4-4l4 4M1427 507l4 4l4-4M1319 523l-4 4l4 4M1412 523l4 4l-4 4" fill="none" stroke="#606060" stroke-width="2"/>
<g clip-path="url(#cTree)">
<path d="M1333.500 386V469M1352.500 386V458M1352 394h10M1352 410h10M1352 426h10M1352 442h10M1352 458h10M1352.500 480V506M1352 490h10M1352 506h10M1338 474.500h5" fill="none" stroke="#555" stroke-dasharray="1 1"/>
<rect x="1329.500" y="470.500" width="8" height="8" fill="#fff" stroke="#888"/><path d="M1331 474.500h5" stroke="#111"/>
<g fill="#fff" stroke="#000" stroke-width="2">
<rect x="1364" y="388" width="12" height="12"/><rect x="1364" y="404" width="12" height="12"/><rect x="1364" y="420" width="12" height="12"/><rect x="1364" y="436" width="12" height="12"/><rect x="1364" y="452" width="12" height="12"/><rect x="1345" y="468" width="12" height="12"/><rect x="1364" y="484" width="12" height="12"/><rect x="1364" y="500" width="12" height="12"/>
</g>
<path d="M1366.500 394l2.500 2.500l4.500-5M1366.500 410l2.500 2.500l4.500-5M1366.500 426l2.500 2.500l4.500-5M1347.500 474l2.500 2.500l4.500-5M1366.500 490l2.500 2.500l4.500-5M1366.500 506l2.500 2.500l4.500-5" fill="none" stroke="#000" stroke-width="2"/>
<path d="M1366.500 442l2.500 2.500l4.500-5M1366.500 458l2.500 2.500l4.500-5" fill="none" stroke="#aaa" stroke-width="2"/>
<text x="1381" y="398" textLength="28" lengthAdjust="spacingAndGlyphs">Visual</text>
<text x="1381" y="414" textLength="30" lengthAdjust="spacingAndGlyphs">Sound</text>
<text x="1381" y="430" textLength="43" lengthAdjust="spacingAndGlyphs">Cameras</text>
<text x="1381" y="446" textLength="43" lengthAdjust="spacingAndGlyphs">Game Lc</text>
<text x="1380" y="462" textLength="44" lengthAdjust="spacingAndGlyphs">AI, Chore</text>
<text x="1362" y="478" textLength="62" lengthAdjust="spacingAndGlyphs">World Details</text>
<text x="1381" y="494" textLength="26" lengthAdjust="spacingAndGlyphs">Props</text>
<text x="1381" y="510" textLength="42" lengthAdjust="spacingAndGlyphs">Func De</text>
</g>
<!-- small buttons -->
<g fill="#f0f0f0" stroke="#fff">
<rect x="1301.500" y="546.500" width="34" height="16"/><rect x="1337.500" y="546.500" width="35" height="16"/><rect x="1375.500" y="546.500" width="35" height="16"/><rect x="1414.500" y="546.500" width="16" height="16"/><rect x="1432.500" y="546.500" width="16" height="16"/>
<rect x="1349.500" y="569.500" width="47" height="22"/><rect x="1399.500" y="569.500" width="47" height="22"/>
<rect x="1321.500" y="704.500" width="106" height="22"/>
</g>
<path d="M1301 562.500h35V546M1337 562.500h36V546M1375 562.500h36V546M1414 562.500h17V546M1432 562.500h17V546M1349 591.500h48V569M1399 591.500h48V569M1321 726.500h107V704" fill="none" stroke="#666" stroke-width="1.300"/>
<text x="1304" y="558" textLength="28" lengthAdjust="spacingAndGlyphs"><tspan text-decoration="underline">S</tspan>how</text>
<text x="1347" y="558" textLength="17" lengthAdjust="spacingAndGlyphs"><tspan text-decoration="underline">E</tspan>dit</text>
<text x="1382" y="558" textLength="23" lengthAdjust="spacingAndGlyphs"><tspan text-decoration="underline">M</tspan>ark</text>
<path d="M1422.500 548l5 6h-3v6h-4v-6h-3z" fill="#000"/><path d="M1440.500 560l-5-6h3v-6h4v6h3z" fill="#000"/>
<text x="1303" y="578" textLength="28" lengthAdjust="spacingAndGlyphs">Move</text>
<text x="1303" y="591" textLength="43" lengthAdjust="spacingAndGlyphs">selected:</text>
<text x="1354" y="584" textLength="38" lengthAdjust="spacingAndGlyphs">to<tspan text-decoration="underline">W</tspan>orld</text>
<text x="1405" y="584" textLength="36" lengthAdjust="spacingAndGlyphs">to<tspan text-decoration="underline">E</tspan>ntity</text>
<text x="1304" y="609" textLength="53" lengthAdjust="spacingAndGlyphs"><tspan text-decoration="underline">C</tspan>ategories:</text>
<rect x="1303" y="614" width="142" height="19" fill="#f0f0f0"/><path d="M1303.500 633V614.500H1445" fill="none" stroke="#777" stroke-width="1.500"/><path d="M1445 614v19H1303" fill="none" stroke="#fff"/>
<rect x="1427" y="617" width="16" height="15" fill="#f0f0f0" stroke="#ccc"/><path d="M1431 623h8l-4 4z" fill="#aaa"/>
<text x="1304" y="648" textLength="38" lengthAdjust="spacingAndGlyphs"><tspan text-decoration="underline">O</tspan>bjects:</text>
<rect x="1303" y="653" width="142" height="22" fill="#f0f0f0"/><path d="M1303.500 675V653.500H1445" fill="none" stroke="#777" stroke-width="1.500"/><path d="M1445 653v22H1303" fill="none" stroke="#fff"/>
<rect x="1427" y="656" width="16" height="17" fill="#f0f0f0" stroke="#ccc"/><path d="M1431 663h8l-4 4z" fill="#aaa"/>
<rect x="1343" y="678" width="34" height="22" fill="#fff"/><path d="M1343.500 700V678.500H1377" fill="none" stroke="#777" stroke-width="1.500"/>
<text x="1347" y="692">0</text>
<rect x="1378.500" y="678.500" width="16" height="10" fill="#f0f0f0" stroke="#fff"/><rect x="1378.500" y="690.500" width="16" height="10" fill="#f0f0f0" stroke="#fff"/><path d="M1378 688.500h17V678M1378 700.500h17V690" fill="none" stroke="#666"/>
<path d="M1385 684h3l-1.500-2zM1385 694h3l-1.500 2z" fill="#000"/>
<text x="1342" y="719" textLength="65" lengthAdjust="spacingAndGlyphs"><tspan text-decoration="underline">C</tspan>reate Prefab</text>

<!-- status bar -->
<rect y="840" width="1600" height="20" fill="#f0f0f0"/>
<rect y="839" width="1600" height="1" fill="#a0a0a0"/>
<path d="M710.500 860V843.500H1013M1017.500 860V843.500H1121M1125.500 860V843.500H1310M1313.500 860V843.500H1397M1401.500 860V843.500H1540M1544.500 860V843.500H1600" fill="none" stroke="#999"/>
<text x="2.500" y="856" textLength="91" lengthAdjust="spacingAndGlyphs">For Help, press F1</text>
<text x="711" y="856" textLength="87" lengthAdjust="spacingAndGlyphs">info_player_start</text>
<text x="806" y="856" textLength="59" lengthAdjust="spacingAndGlyphs">[dist: 106.3]</text>
<text x="1130" y="856" textLength="154" lengthAdjust="spacingAndGlyphs">32w 32l 72h @(629 4343 -169)</text>
<text x="1406" y="856" textLength="90" lengthAdjust="spacingAndGlyphs">Snap: On Grid: 64</text>
<text x="1547" y="856" textLength="18" lengthAdjust="spacingAndGlyphs">&lt;-&gt;</text>

<!-- taskbar -->
<rect y="860" width="1600" height="40" fill="url(#tb)"/>
<rect x="49" y="860" width="342" height="40" fill="#333"/><rect x="49" y="860" width="342" height="40" fill="none" stroke="#555"/>
<path d="M15 873l7.500-1v7.500H15zM24 871.500l8.500-1.200v9.200H24zM15 881h7.500v7.500L15 887.500zM24 881h8.500v9.200L24 889z" fill="#fff"/>
<circle cx="70" cy="879" r="5.500" fill="none" stroke="#eee" stroke-width="1.300"/><path d="M66 883l-5.500 6" stroke="#eee" stroke-width="1.500"/>
<text class="t" x="88" y="886" textLength="128" lengthAdjust="spacingAndGlyphs">Type here to search</text>
<circle cx="416" cy="880" r="6.500" fill="none" stroke="#fff" stroke-width="2"/>
<path d="M457 872h13M457 887h13M458 876h9v7h-9zM470 876v7" fill="none" stroke="#ddd" stroke-width="1.300"/>
<path d="M495.500 872v16M497.500 872v16" stroke="#555"/>
<!-- chrome -->
<circle cx="535" cy="880" r="11" fill="#e33b2e"/><path d="M535 880L526 886A11 11 0 0 0 540 890Z" fill="#2da94f"/><path d="M535 880L545.500 876A11 11 0 0 1 537 891L535 880Z" fill="#fbc116"/><path d="M525 885A11 11 0 0 0 535 891L540 883L530 883Z" fill="#2da94f"/><circle cx="535" cy="880" r="5.500" fill="#fff"/><circle cx="535" cy="880" r="4" fill="#4285f4"/>
<!-- explorer -->
<path d="M573 871h8l2 3h11v16h-21z" fill="#f0b429"/><path d="M573 877h21v13h-21z" fill="#fcd462"/><rect x="580" y="883" width="7" height="7" fill="#2e8bd8"/>
<!-- drop -->
<path d="M633 868C640 876 644 881 644 885C644 891 639 893 633 893C627 893 623 890 623 885C623 880 628 875 633 868Z" fill="url(#drop)"/>
<!-- monitor -->
<path d="M672 871h20v16h-20z" fill="#d8dde0" stroke="#9aa"/><path d="M675 884l4-8l3 6l3-4l3 6" fill="none" stroke="#4a90c8"/><path d="M678 887h9v4h-9z" fill="#bbb"/>
<!-- sfm -->
<circle cx="731" cy="880" r="11" fill="#1c1c1c" stroke="#d8b878" stroke-width="1.500"/><circle cx="731" cy="880" r="7" fill="#d8b878"/><circle cx="731" cy="880" r="2.200" fill="#222"/><circle cx="727" cy="876" r="1.500" fill="#222"/><circle cx="735" cy="876" r="1.500" fill="#222"/><circle cx="727" cy="884" r="1.500" fill="#222"/><circle cx="735" cy="884" r="1.500" fill="#222"/>
<!-- active hammer -->
<rect x="756" y="860" width="48" height="40" fill="#56666f"/>
<circle cx="780" cy="880" r="12" fill="#1d2aa8"/><path d="M772 872l8-3l5 5l4-2l-2 7l-6 3l2 6l-7-3l-5-3z" fill="#2bbf2b"/><path d="M770 885l18-14M776 870l6 21M769 877l21 8" stroke="#000" stroke-width="2"/>
<path d="M515 898h40v2h-40zM564 898h40v2h-40zM613 898h40v2h-40zM711 898h40v2h-40zM756 898h48v2h-48z" fill="#76b9ed"/>
<!-- tray -->
<circle cx="1369" cy="880" r="10.500" fill="#fff"/><circle cx="1369" cy="880" r="8.500" fill="#2a8fe8"/><text x="1364" y="886" style="font-size:16px;fill:#fff;font-weight:bold">?</text><circle cx="1376.500" cy="885.500" r="4.500" fill="#e01020"/><text x="1375" y="889" style="font-size:8px;fill:#fff;font-weight:bold">!</text>
<circle cx="1409" cy="879" r="2.800" fill="none" stroke="#ddd" stroke-width="1.200"/><path d="M1404 887c0-3 2-5 5-5s4 2 4 5" fill="none" stroke="#ddd" stroke-width="1.200"/><circle cx="1415" cy="875" r="2.500" fill="none" stroke="#ddd" stroke-width="1.200"/><path d="M1412 881c1-1 3-1 4-1" fill="none" stroke="#ddd" stroke-width="1.200"/>
<path d="M1441 883l6-6l6 6" fill="none" stroke="#eee" stroke-width="1.300"/>
<path d="M1467 886a6 6 0 0 1 3 3M1467 882a10 10 0 0 1 7 7M1467 878a14 14 0 0 1 10 11" fill="none" stroke="#bbb" stroke-width="1.200"/><circle cx="1469" cy="888" r="1.400" fill="#ddd"/>
<text x="1493" y="875" style="font-size:12px;fill:#e8e8e8" textLength="43" lengthAdjust="spacingAndGlyphs">7:26 AM</text>
<text x="1490" y="893" style="font-size:12px;fill:#e8e8e8" textLength="51" lengthAdjust="spacingAndGlyphs">5/19/2020</text>
<path d="M1559 872h16v12h-8l-3 4v-4h-5z" fill="#fff"/><path d="M1562 875h10M1562 878h10M1562 881h7" stroke="#333"/>
<circle cx="1574" cy="887" r="8" fill="#444" stroke="#888"/><text x="1570.500" y="891.500" style="font-size:11px;fill:#fff;font-weight:bold">2</text>
</svg>
</body></html>
